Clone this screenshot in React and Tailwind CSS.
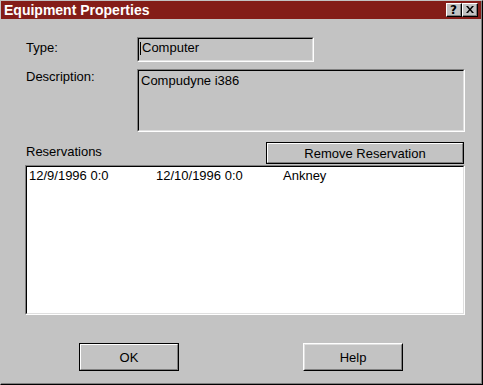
function Sunken({ className = "", innerClassName = "", children }) {
  return (
    <div className={`border-t border-l border-t-[#808080] border-l-[#808080] border-r border-b border-r-white border-b-white ${className}`}>
      <div className={`h-full border-t border-l border-t-black border-l-black border-r border-b border-r-[#dfdfdf] border-b-[#dfdfdf] ${innerClassName}`}>
        {children}
      </div>
    </div>
  );
}

function DefaultButton({ className = "", children }) {
  return (
    <div className={`border border-black ${className}`}>
      <div className="h-full flex items-center justify-center border-t border-l border-t-white border-l-white border-r border-b border-r-[#808080] border-b-[#808080]">
        {children}
      </div>
    </div>
  );
}

function Button({ className = "", children }) {
  return (
    <div className={`border-t border-l border-t-white border-l-white border-r border-b border-r-black border-b-black ${className}`}>
      <div className="h-full flex items-center justify-center border-t border-l border-t-[#dfdfdf] border-l-[#dfdfdf] border-r border-b border-r-[#808080] border-b-[#808080]">
        {children}
      </div>
    </div>
  );
}

function CaptionButton({ children }) {
  return (
    <div className="w-[16px] h-[14px] bg-[#c3c3c3] border-t border-l border-t-white border-l-white border-r border-b border-r-black border-b-black">
      <div className="h-full flex items-center justify-center border-r border-b border-r-[#808080] border-b-[#808080]">
        {children}
      </div>
    </div>
  );
}

export default function App() {
  return (
    <div className="w-[483px] h-[385px] bg-[#c3c3c3] font-['Liberation_Sans',Arial,sans-serif] text-[13px] leading-[15px] text-black border-t border-l border-t-[#c3c3c3] border-l-[#c3c3c3] border-r border-b border-r-black border-b-black">
      <div className="h-full flex flex-col border-r border-b border-r-[#808080] border-b-[#808080]">
        {/* Title bar */}
        <div className="h-[18px] shrink-0 bg-[#841d18] flex items-center pl-[3px] pr-[3px]">
          <span className="text-white font-bold text-[14px] leading-[16px]">Equipment Properties</span>
          <div className="ml-auto flex">
            <CaptionButton>
              <span className="font-bold text-[12px] leading-[12px] font-['DejaVu_Sans',sans-serif]">?</span>
            </CaptionButton>
            <CaptionButton>
              <svg width="8" height="7" viewBox="0 0 8 7">
                <path d="M0 0h2l2 2.5L6 0h2L5 3.5 8 7H6L4 4.5 2 7H0l3-3.5z" fill="black" />
              </svg>
            </CaptionButton>
          </div>
        </div>

        {/* Body */}
        <div className="flex-1 flex flex-col pl-[24px] pr-[16px]">
          <div className="flex mt-[18px]">
            <div className="w-[112px] pt-[3px] pl-[1px]">Type:</div>
            <Sunken className="w-[177px] h-[25px]" innerClassName="flex items-start pl-[1px] pt-[1px]">
              <div className="w-px h-[13px] mt-[2px] bg-black" />
              <span className="pl-[1px]">Computer</span>
            </Sunken>
          </div>

          <div className="flex mt-[7px]">
            <div className="w-[112px] pl-[1px]">Description:</div>
            <Sunken className="w-[328px] h-[63px]" innerClassName="pl-[2px] pt-[2px]">
              Compudyne i386
            </Sunken>
          </div>

          <div className="flex items-start justify-between mt-[10px]">
            <div className="pt-[2px] pl-[1px]">Reservations</div>
            <DefaultButton className="w-[198px] h-[22px] mr-[1px]">Remove Reservation</DefaultButton>
          </div>

          <Sunken className="mt-[1px] h-[150px]" innerClassName="bg-white pl-[2px] pt-[1px]">
            <div className="flex">
              <span className="w-[127px]">12/9/1996 0:0</span>
              <span className="w-[127px]">12/10/1996 0:0</span>
              <span>Ankney</span>
            </div>
          </Sunken>

          <div className="flex mt-[28px] ml-[54px] gap-[124px]">
            <DefaultButton className="w-[100px] h-[28px]">OK</DefaultButton>
            <Button className="w-[100px] h-[28px]">Help</Button>
          </div>
        </div>
      </div>
    </div>
  );
}
